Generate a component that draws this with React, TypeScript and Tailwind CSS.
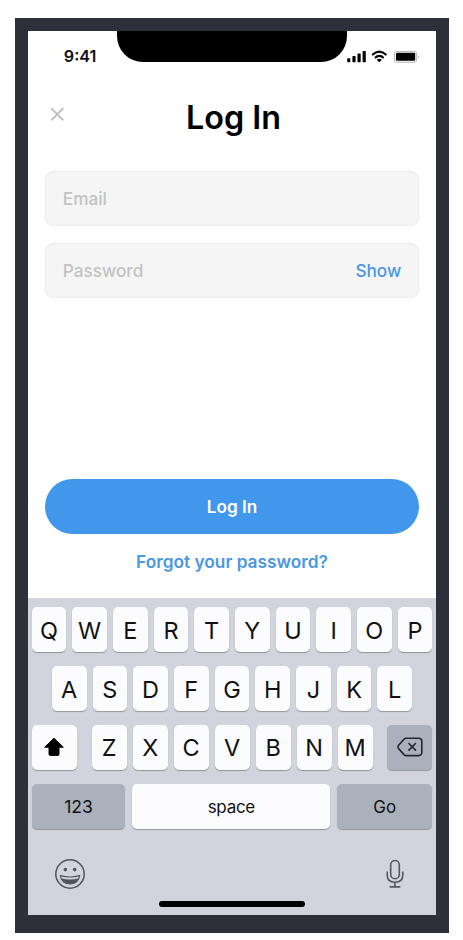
import React from "react";

const ROW_ONE = ["Q", "W", "E", "R", "T", "Y", "U", "I", "O", "P"];
const ROW_TWO = ["A", "S", "D", "F", "G", "H", "J", "K", "L"];
const ROW_THREE = ["Z", "X", "C", "V", "B", "N", "M"];

function LetterKey({ label }: { label: string }) {
  return (
    <div className="flex h-[45px] w-[34.7px] items-center justify-center rounded-[5px] bg-[#fcfcfe] pt-[1.5px] text-[23.5px] leading-none text-[#111113] shadow-[0_1px_1px_#93959b]">
      {label}
    </div>
  );
}

function StatusBar() {
  return (
    <div className="flex h-[52px] items-start">
      <div className="w-[89px] pt-[16px] pl-[35.8px] text-[16.2px] leading-[19px] font-semibold text-[#111]">9:41</div>
      <div className="h-[31px] w-[230px] rounded-b-[26px] bg-black" />
      <svg className="mt-[18px]" width="76" height="16" viewBox="0 0 76 16">
        <rect x="0.2" y="9.2" width="3.1" height="4" rx="0.8" />
        <rect x="5.4" y="7" width="3.2" height="6.2" rx="0.8" />
        <rect x="10.5" y="4.6" width="3.2" height="8.6" rx="0.8" />
        <rect x="15.6" y="1.9" width="3.2" height="11.3" rx="0.8" />
        <g fill="none" stroke="#000" strokeWidth="2">
          <path d="M25.2 6Q32.3-.7 39.4 6" />
          <path d="M27.9 8.9Q32.3 4.9 36.7 8.9" />
        </g>
        <path d="M32.3 13.3L29.7 10.8Q32.3 8.8 34.9 10.8Z" />
        <rect x="47.4" y="2.4" width="22.2" height="10.8" rx="2.2" fill="none" stroke="#b5b5b5" strokeWidth="1" />
        <rect x="49" y="3.8" width="19.2" height="8" rx="1" />
        <path d="M71.2 6.2Q73 7.6 71.2 9.4Z" fill="#aaa" />
      </svg>
    </div>
  );
}

function Keyboard() {
  return (
    <div className="flex h-[317px] flex-col bg-[#d1d4dc] px-[3.7px] pt-[9px] text-[#111113]">
      <div className="flex justify-between">
        {ROW_ONE.map((k) => <LetterKey key={k} label={k} />)}
      </div>
      <div className="mt-[14px] flex justify-between px-[20.2px]">
        {ROW_TWO.map((k) => <LetterKey key={k} label={k} />)}
      </div>
      <div className="mt-[13.5px] flex justify-between">
        <div className="flex h-[45px] w-[45.5px] items-center justify-center rounded-[5px] bg-[#fcfcfe] shadow-[0_1px_1px_#93959b]">
          <svg width="22" height="20" viewBox="0 0 22 20">
            <path d="M11 1.2L20.3 10.2H16V17.2Q16 18.4 14.8 18.4H7.2Q6 18.4 6 17.2V10.2H1.7Z" stroke="#000" strokeWidth="1" strokeLinejoin="round" />
          </svg>
        </div>
        <div className="flex w-[280.7px] justify-between">
          {ROW_THREE.map((k) => <LetterKey key={k} label={k} />)}
        </div>
        <div className="flex h-[45px] w-[45.2px] items-center justify-center rounded-[5px] bg-[#abb1bc] shadow-[0_1px_1px_#93959b]">
          <svg width="26" height="20" viewBox="0 0 26 20" fill="none" stroke="#23262d" strokeWidth="1.6" strokeLinejoin="round" strokeLinecap="round">
            <path d="M9.3 1.2H21.5Q24.8 1.2 24.8 4.5V15.3Q24.8 18.6 21.5 18.6H9.3Q8 18.6 7 17.6L1.6 11.6Q.3 9.9 1.6 8.3L7 2.2Q8 1.2 9.3 1.2Z" />
            <path d="M11.9 6.5L18.5 13.1M18.5 6.5L11.9 13.1" />
          </svg>
        </div>
      </div>
      <div className="mt-[14px] flex justify-between text-[17px] leading-none">
        <div className="flex h-[45.5px] w-[93.8px] items-center justify-center rounded-[5px] bg-[#abb1bc] pt-[2px] text-[17.6px] shadow-[0_1px_1px_#93959b]">123</div>
        <div className="flex h-[45.5px] w-[198px] items-center justify-center rounded-[5px] bg-[#fcfcfe] pt-[2px] tracking-[-0.3px] shadow-[0_1px_1px_#93959b]">space</div>
        <div className="flex h-[45.5px] w-[95.2px] items-center justify-center rounded-[5px] bg-[#abb1bc] pt-[2px] shadow-[0_1px_1px_#93959b]">Go</div>
      </div>
      <div className="mt-[29px] flex h-[32px] justify-between pr-[27px] pl-[22.3px]">
        <svg width="32" height="32" viewBox="0 0 32 32" fill="none" stroke="#50535a" strokeWidth="1.5">
          <circle cx="16" cy="16" r="14.2" />
          <circle cx="11.3" cy="11.6" r="1.8" fill="#50535a" stroke="none" />
          <circle cx="20.7" cy="11.6" r="1.8" fill="#50535a" stroke="none" />
          <path d="M6.4 17.6Q16 20.4 25.6 17.6C25.2 22.7 21.4 26 16 26S6.8 22.7 6.4 17.6Z" strokeWidth="1.1" />
          <path d="M7 20.2Q16 23 25 20.2C23.5 24 20.3 26 16 26S8.5 24 7 20.2Z" fill="#50535a" stroke="none" />
        </svg>
        <svg width="20" height="32" viewBox="0 0 20 32" fill="none" stroke="#555860" strokeWidth="1.6" strokeLinecap="round">
          <rect x="5.7" y="2.5" width="8.6" height="18.3" rx="4.3" />
          <path d="M2.2 14V17Q2.2 24.2 10 24.2T17.8 17V14M10 24.2V28.7M5.2 28.9H14.8" />
        </svg>
      </div>
      <div className="mt-[11px] ml-[127.8px] h-[5.5px] w-[145.5px] rounded-full bg-black" />
    </div>
  );
}

export default function App() {
  return (
    <div className="h-[940px] w-[463px] bg-white pt-[18px] pl-[15px] font-['Inter','Liberation_Sans',sans-serif]">
      <div className="flex h-[915px] w-[434px] flex-col border-[13px] border-b-[18px] border-[#2d2f39] bg-white">
        <StatusBar />
        <div className="grid h-[88px] grid-cols-[60px_1fr_60px] pt-[12px]">
          <svg className="mt-[11px] ml-[21px]" width="16" height="16" viewBox="0 0 16 16" stroke="#bdbdbd" strokeWidth="1.9">
            <path d="M2.2 2.2L14.3 14.3M14.3 2.2L2.2 14.3" />
          </svg>
          <h1 className="pt-[2px] pl-[3px] text-center text-[32.3px] leading-[42px] font-semibold text-black">Log In</h1>
        </div>
        <div className="flex flex-col gap-[16.5px] px-[17.3px] text-[17.2px] font-medium">
          <div className="flex h-[55px] items-center rounded-lg border border-[#ebebeb] bg-[#f5f5f5] px-[16.5px] pt-px text-[#c2c2c2]">Email</div>
          <div className="flex h-[55px] items-center justify-between rounded-lg border border-[#ebebeb] bg-[#f5f5f5] px-[16.5px] pt-px text-[#c2c2c2]">
            Password
            <span className="text-[#4897e6]">Show</span>
          </div>
        </div>
        <div className="mt-auto flex flex-col items-center px-[17.3px] pb-[25px]">
          <button className="h-[55.5px] w-full rounded-full bg-[#4097ec] pt-px text-[17.2px] font-semibold text-white">Log In</button>
          <a className="mt-[16px] text-[17.3px] leading-[23px] font-semibold text-[#4a98e2]">Forgot your password?</a>
        </div>
        <Keyboard />
      </div>
    </div>
  );
}
